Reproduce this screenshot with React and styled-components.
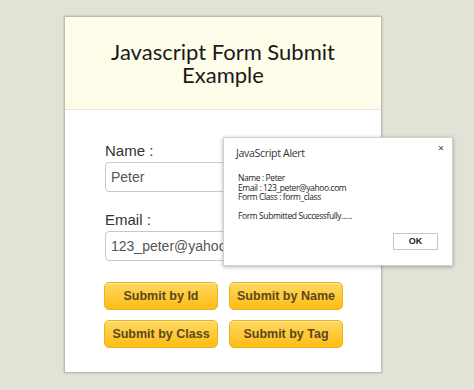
import React from "react";
import styled, { createGlobalStyle } from "styled-components";

const Global = createGlobalStyle`
  html, body { margin: 0; padding: 0; }
  body {
    background: #e2e2d7;
    font-family: "Liberation Sans", Arial, sans-serif;
  }
`;

const Page = styled.div`
  position: relative;
  width: 474px;
  height: 390px;
  overflow: hidden;
  padding: 17px 0 0 65px;
  box-sizing: border-box;
`;

const Card = styled.div`
  width: 316px;
  height: 355px;
  background: #fff;
  box-shadow: 0 0 2px 1px rgba(0, 0, 0, 0.25);
  display: flex;
  flex-direction: column;
`;

const Header = styled.div`
  height: 92px;
  background: #fdfde9;
  border-bottom: 1px solid #e6e6dc;
  display: flex;
  align-items: center;
  justify-content: center;
  text-align: center;
`;

const Title = styled.h1`
  margin: 0;
  font-family: "Lato", "Open Sans", sans-serif;
  font-weight: 400;
  font-size: 22px;
  line-height: 23px;
  color: #1a1a1a;
  width: 250px;
`;

const Form = styled.div`
  padding: 32px 40px 0 40px;
  display: flex;
  flex-direction: column;
`;

const Label = styled.label`
  font-size: 15px;
  color: #333;
  line-height: 17px;
  margin-bottom: 3px;
`;

const Input = styled.div`
  width: 236px;
  height: 30px;
  box-sizing: border-box;
  border: 1px solid #c8c8c8;
  border-radius: 4px;
  padding: 0 5px;
  font-size: 14px;
  color: #555;
  line-height: 28px;
  margin-bottom: ${(p) => p.$gap || 0}px;
  white-space: nowrap;
  overflow: hidden;
`;

const Buttons = styled.div`
  display: grid;
  grid-template-columns: 114px 114px;
  column-gap: 11px;
  row-gap: 10px;
  margin-top: 21px;
  margin-left: -1px;
`;

const Button = styled.button`
  height: 28px;
  border: 1px solid #eab319;
  border-radius: 5px;
  background: linear-gradient(#fed862, #ffbc14);
  box-shadow: inset 0 1px 0 rgba(255, 255, 255, 0.35);
  font-family: "Liberation Sans", Arial, sans-serif;
  font-weight: 700;
  font-size: 12.5px;
  color: #5a4820;
  padding: 0;
`;

const Alert = styled.div`
  position: absolute;
  left: 223px;
  top: 137px;
  width: 230px;
  height: 129px;
  box-sizing: border-box;
  background: #fff;
  border: 1px solid #d0d0d0;
  box-shadow: 0 1px 4px rgba(0, 0, 0, 0.3);
  font-family: "Open Sans", "Noto Sans", sans-serif;
  color: #222;
  padding: 7px 11px 0 12px;
  display: flex;
  flex-direction: column;
`;

const AlertTop = styled.div`
  display: flex;
  justify-content: space-between;
  align-items: flex-start;
`;

const AlertTitle = styled.div`
  font-size: 10.5px;
  letter-spacing: -0.3px;
  color: #333;
  margin-top: 1px;
`;

const Close = styled.span`
  font-size: 11px;
  color: #444;
  line-height: 10px;
  margin-top: -2px;
  margin-right: -3px;
`;

const Msg = styled.div`
  margin-top: 13px;
  font-size: 8.5px;
  line-height: 9.6px;
  padding-left: 2px;
  letter-spacing: -0.4px;
`;

const Ok = styled.div`
  align-self: flex-end;
  margin-top: 12px;
  margin-right: 3px;
  width: 45px;
  height: 17px;
  box-sizing: border-box;
  border: 1px solid #c6c6c6;
  background: #fff;
  font-family: "Liberation Sans", Arial, sans-serif;
  font-size: 9px;
  font-weight: 700;
  display: flex;
  align-items: center;
  justify-content: center;
  color: #222;
`;

export default function App() {
  return (
    <>
      <Global />
      <Page>
        <Card>
          <Header>
            <Title>Javascript Form Submit Example</Title>
          </Header>
          <Form>
            <Label>Name :</Label>
            <Input $gap={19}>Peter</Input>
            <Label>Email :</Label>
            <Input>123_peter@yahoo.com</Input>
            <Buttons>
              <Button>Submit by Id</Button>
              <Button>Submit by Name</Button>
              <Button>Submit by Class</Button>
              <Button>Submit by Tag</Button>
            </Buttons>
          </Form>
        </Card>
        <Alert>
          <AlertTop>
            <AlertTitle>JavaScript Alert</AlertTitle>
            <Close>×</Close>
          </AlertTop>
          <Msg>
            Name : Peter
            <br />
            Email : 123_peter@yahoo.com
            <br />
            Form Class : form_class
            <br />
            <br />
            Form Submitted Successfully......
          </Msg>
          <Ok>OK</Ok>
        </Alert>
      </Page>
    </>
  );
}
